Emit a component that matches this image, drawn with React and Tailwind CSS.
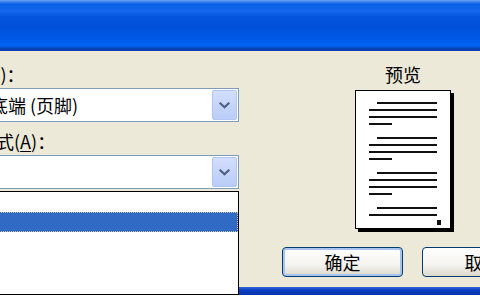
import React from 'react';

const FONT = { fontFamily: "'Noto Sans CJK SC', 'Noto Sans', sans-serif" };

const Chevron = () => (
    <svg width="11" height="7" viewBox="0 0 11 7" fill="none">
        <path d="M1.5 1.5 L5.5 5.2 L9.5 1.5" stroke="#4d6185" strokeWidth="2.2" strokeLinecap="square" />
    </svg>
);

const ComboBox = ({ value }) => (
    <div className="h-[34px] flex items-stretch border border-[#7f9db9] bg-white p-[1px]">
        <div className="flex-1 flex items-center pl-[11px] text-[18px] text-black whitespace-nowrap">{value}</div>
        <div className="w-[25px] flex items-center justify-center rounded-[2px] bg-[linear-gradient(180deg,#d2defc,#b9cdf8)] border border-[#b1c5f3]">
            <Chevron />
        </div>
    </div>
);

const pageGroups = [4, 4, 4, 2];

const PreviewPage = () => (
    <div className="w-[96px] h-[139px] bg-white border border-black shadow-[3px_3px_0_#000] pt-[11px] flex flex-col gap-[12px]">
        {pageGroups.map((count, g) => (
            <div key={g} className="flex flex-col gap-[5px]">
                {Array.from({ length: count }).map((_, i) => {
                    // first line of a paragraph indented, last one short
                    let cls = 'ml-[13px] w-[68px]';
                    if (i === 0) cls = 'ml-[21px] w-[60px]';
                    else if (i === 3) cls = 'ml-[13px] w-[23px]';
                    return <div key={i} className={`h-[2px] bg-[#111] ${cls}`} />;
                })}
                {g === pageGroups.length - 1 && (
                    <div className="ml-[81px] mt-[-1px] w-[4px] h-[5px] bg-[#111]" />
                )}
            </div>
        ))}
    </div>
);

const XpButton = ({ children, isDefault }) => (
    <button
        className={`w-[121px] h-[30px] shrink-0 rounded-[4px] border border-[#003c74] bg-[linear-gradient(180deg,#ffffff,#f4f3ee_60%,#dcd8cc)] text-[18px] text-black leading-none ${
            isDefault ? 'shadow-[inset_0_0_0_2px_#a9c3ef]' : ''
        }`}
    >
        {children}
    </button>
);

export default function App() {
    return (
        <div className="w-[480px] h-[300px] overflow-hidden bg-white flex flex-col" style={FONT}>
            {/* title bar */}
            <div className="h-[51px] shrink-0 bg-[linear-gradient(180deg,#6aa4f2_0px,#0b5fe6_4px,#1568ee_11px,#0554de_17px,#0050d8_27px,#0058e6_37px,#0063f2_46px,#0a3fb0_49px,#0a3fb0_51px)]" />

            {/* dialog body */}
            <div className="h-[236px] shrink-0 bg-[#ece9d8] flex items-start">
                <div className="-ml-[59px] w-[298px] shrink-0 flex flex-col text-black">
                    <div className="mt-[13px] ml-[6px] h-[20px] leading-[20px] text-[18px] whitespace-nowrap">位置(P)：</div>
                    <div className="mt-[4px]">
                        <ComboBox value="页面底端 (页脚)" />
                    </div>
                    <div className="mt-[9px] ml-[1px] h-[20px] leading-[20px] text-[18px] whitespace-nowrap">
                        对齐方式(<span className="underline underline-offset-2">A</span>)：
                    </div>
                    <div className="mt-[4px] relative">
                        <ComboBox value="" />
                        {/* open drop-down list */}
                        <div className="absolute left-0 right-0 top-[36px] h-[104px] z-10 bg-white border border-black flex flex-col">
                            <div className="h-[20px] shrink-0" />
                            <div className="h-[20px] shrink-0 bg-[#316ac5] border border-dotted border-[#c9c3a6]" />
                        </div>
                    </div>
                </div>

                <div className="flex flex-col">
                    <div className="ml-[116px] w-[99px] flex flex-col items-start">
                        <div className="mt-[13px] w-[96px] h-[20px] leading-[20px] text-center text-[18px] text-black">预览</div>
                        <div className="mt-[6px]">
                            <PreviewPage />
                        </div>
                    </div>
                    <div className="ml-[43px] mt-[18px] flex gap-[19px]">
                        <XpButton isDefault>确定</XpButton>
                        <XpButton>取消</XpButton>
                    </div>
                </div>
            </div>

            {/* bottom frame */}
            <div className="h-[8px] shrink-0 bg-[linear-gradient(180deg,#3566dc,#0b3fc6_40%,#0733a8)]" />
        </div>
    );
}
